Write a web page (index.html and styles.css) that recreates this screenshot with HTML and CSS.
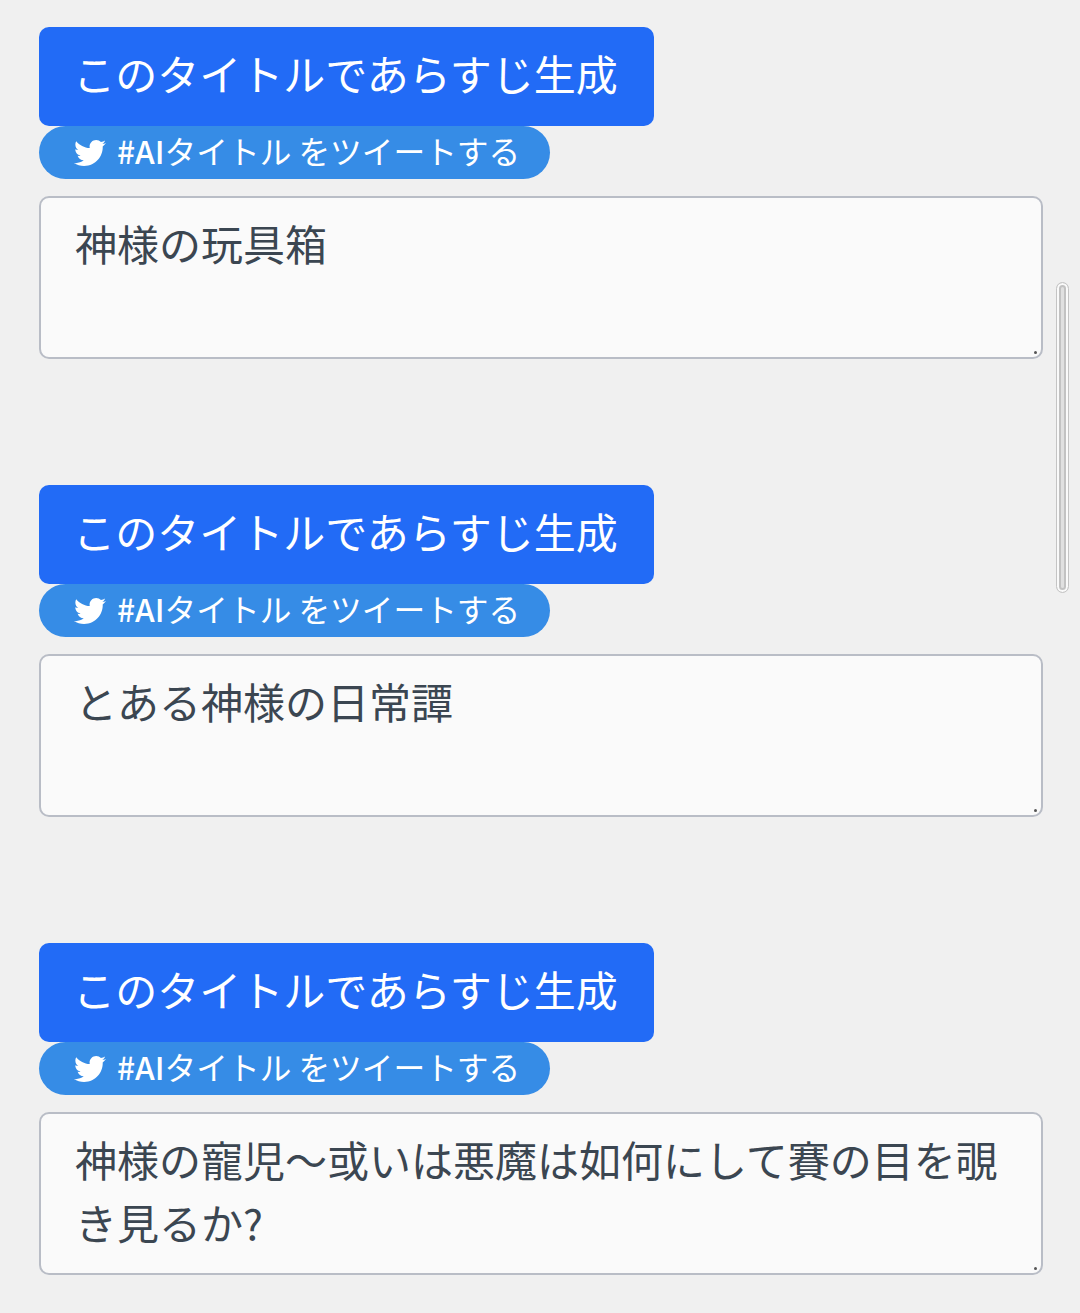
FILE: index.html
```html
<!DOCTYPE html>
<html lang="ja">
<head>
<meta charset="utf-8">
<title>AIタイトル</title>
<link rel="stylesheet" href="styles.css">
</head>
<body>
<main class="list">
  <section class="item">
    <button class="generate">このタイトルであらすじ生成</button>
    <a class="tweet"><svg class="bird" viewBox="0 0 512 512"><path d="M459.37 151.716c.325 4.548.325 9.097.325 13.645 0 138.72-105.583 298.558-298.558 298.558-59.452 0-114.68-17.219-161.137-47.106 8.447.974 16.568 1.299 25.34 1.299 49.055 0 94.213-16.568 130.274-44.832-46.132-.975-84.792-31.188-98.112-72.772 6.498.974 12.995 1.624 19.818 1.624 9.421 0 18.843-1.3 27.614-3.573-48.081-9.747-84.143-51.98-84.143-102.985v-1.299c13.969 7.797 30.214 12.67 47.431 13.319-28.264-18.843-46.781-51.005-46.781-87.391 0-19.492 5.197-37.36 14.294-52.954 51.655 63.675 129.3 105.258 216.365 109.807-1.624-7.797-2.599-15.918-2.599-24.04 0-57.828 46.782-104.934 104.934-104.934 30.213 0 57.502 12.67 76.67 33.137 23.715-4.548 46.456-13.32 66.599-25.34-7.798 24.366-24.366 44.833-46.132 57.827 21.117-2.273 41.584-8.122 60.426-16.243-14.292 20.791-32.161 39.308-52.628 54.253z"/></svg><span class="label"><b class="tag">#AI</b>タイトル をツイートする</span></a>
    <div class="box"><textarea class="field" readonly>神様の玩具箱</textarea><i class="grip"></i></div>
  </section>
  <section class="item">
    <button class="generate">このタイトルであらすじ生成</button>
    <a class="tweet"><svg class="bird" viewBox="0 0 512 512"><path d="M459.37 151.716c.325 4.548.325 9.097.325 13.645 0 138.72-105.583 298.558-298.558 298.558-59.452 0-114.68-17.219-161.137-47.106 8.447.974 16.568 1.299 25.34 1.299 49.055 0 94.213-16.568 130.274-44.832-46.132-.975-84.792-31.188-98.112-72.772 6.498.974 12.995 1.624 19.818 1.624 9.421 0 18.843-1.3 27.614-3.573-48.081-9.747-84.143-51.98-84.143-102.985v-1.299c13.969 7.797 30.214 12.67 47.431 13.319-28.264-18.843-46.781-51.005-46.781-87.391 0-19.492 5.197-37.36 14.294-52.954 51.655 63.675 129.3 105.258 216.365 109.807-1.624-7.797-2.599-15.918-2.599-24.04 0-57.828 46.782-104.934 104.934-104.934 30.213 0 57.502 12.67 76.67 33.137 23.715-4.548 46.456-13.32 66.599-25.34-7.798 24.366-24.366 44.833-46.132 57.827 21.117-2.273 41.584-8.122 60.426-16.243-14.292 20.791-32.161 39.308-52.628 54.253z"/></svg><span class="label"><b class="tag">#AI</b>タイトル をツイートする</span></a>
    <div class="box"><textarea class="field" readonly>とある神様の日常譚</textarea><i class="grip"></i></div>
  </section>
  <section class="item">
    <button class="generate">このタイトルであらすじ生成</button>
    <a class="tweet"><svg class="bird" viewBox="0 0 512 512"><path d="M459.37 151.716c.325 4.548.325 9.097.325 13.645 0 138.72-105.583 298.558-298.558 298.558-59.452 0-114.68-17.219-161.137-47.106 8.447.974 16.568 1.299 25.34 1.299 49.055 0 94.213-16.568 130.274-44.832-46.132-.975-84.792-31.188-98.112-72.772 6.498.974 12.995 1.624 19.818 1.624 9.421 0 18.843-1.3 27.614-3.573-48.081-9.747-84.143-51.98-84.143-102.985v-1.299c13.969 7.797 30.214 12.67 47.431 13.319-28.264-18.843-46.781-51.005-46.781-87.391 0-19.492 5.197-37.36 14.294-52.954 51.655 63.675 129.3 105.258 216.365 109.807-1.624-7.797-2.599-15.918-2.599-24.04 0-57.828 46.782-104.934 104.934-104.934 30.213 0 57.502 12.67 76.67 33.137 23.715-4.548 46.456-13.32 66.599-25.34-7.798 24.366-24.366 44.833-46.132 57.827 21.117-2.273 41.584-8.122 60.426-16.243-14.292 20.791-32.161 39.308-52.628 54.253z"/></svg><span class="label"><b class="tag">#AI</b>タイトル をツイートする</span></a>
    <div class="box"><textarea class="field" readonly>神様の寵児～或いは悪魔は如何にして賽の目を覗き見るか?</textarea><i class="grip"></i></div>
  </section>
</main>
<div class="scrollbar"></div>
</body>
</html>
```
FILE: styles.css
```css
* { box-sizing: border-box; }
html, body { height: 100%; }
body {
  margin: 0;
  background: #f0f0f0;
  font-family: "Noto Sans CJK JP", "Noto Sans", sans-serif;
  overflow: hidden;
}
.list {
  display: flex;
  flex-direction: column;
  gap: 126px;
  padding: 27px 37px 0 39px;
}
.item {
  display: flex;
  flex-direction: column;
  align-items: flex-start;
}
.generate {
  width: 615px;
  height: 99px;
  padding: 0 2px 8px 0;
  border: 0;
  border-radius: 10px;
  background: #226bf6;
  color: #fff;
  font: inherit;
  font-size: 42px;
  white-space: nowrap;
}
.tweet {
  display: flex;
  align-items: center;
  gap: 11px;
  width: 511px;
  height: 53px;
  padding-left: 35px;
  border-radius: 27px;
  background: #368ce6;
  color: #fff;
  font-size: 31.7px;
  white-space: nowrap;
}
.label { position: relative; top: -3px; }
.tag { font-weight: 500; }
.bird { width: 32px; height: 32px; fill: #fff; }
.box {
  position: relative;
  width: 100%;
  height: 163px;
  margin-top: 17px;
}
.field {
  display: block;
  width: 100%;
  height: 100%;
  padding: 13px 34px;
  border: 2px solid #b9bdc6;
  border-radius: 10px;
  background: #fafafa;
  color: #3b4651;
  font: inherit;
  font-size: 42px;
  line-height: 63px;
  resize: none;
  overflow: hidden;
  outline: 0;
}
.grip {
  position: absolute;
  right: 6px;
  bottom: 5px;
  width: 3px;
  height: 3px;
  border-radius: 50%;
  background: #555;
}
.scrollbar {
  position: fixed;
  top: 282px;
  left: 1056px;
  width: 13px;
  height: 311px;
  border: 1px solid #c4c4c4;
  border-radius: 7px;
  background: #e0e0e0;
  box-shadow: inset 0 0 0 2px #fafafa, inset 0 0 0 4px #c2c2c2;
}
```
